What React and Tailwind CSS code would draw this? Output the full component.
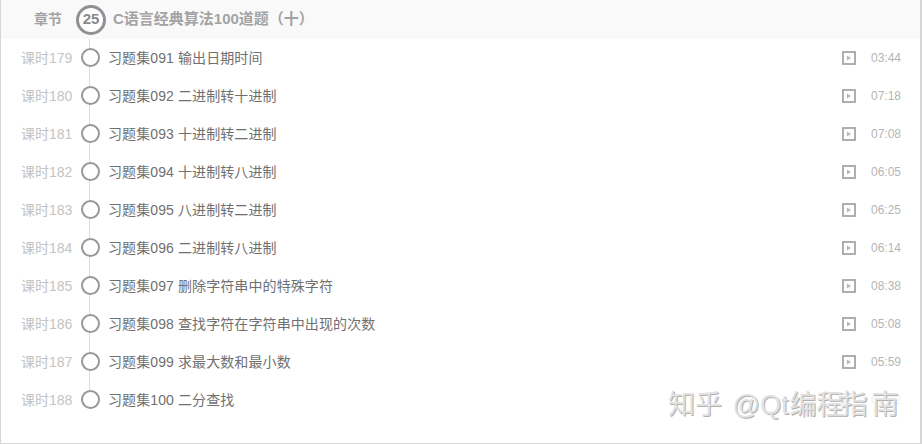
const rows = [
  ["179", "习题集091 输出日期时间", "03:44"],
  ["180", "习题集092 二进制转十进制", "07:18"],
  ["181", "习题集093 十进制转二进制", "07:08"],
  ["182", "习题集094 十进制转八进制", "06:05"],
  ["183", "习题集095 八进制转二进制", "06:25"],
  ["184", "习题集096 二进制转八进制", "06:14"],
  ["185", "习题集097 删除字符串中的特殊字符", "08:38"],
  ["186", "习题集098 查找字符在字符串中出现的次数", "05:08"],
  ["187", "习题集099 求最大数和最小数", "05:59"],
  ["188", "习题集100 二分查找", "05:12"],
];

const font = { fontFamily: '"Liberation Sans", "Noto Sans CJK SC", sans-serif' };

function PlayIcon({ faint }) {
  return (
    <svg width="14" height="14" viewBox="0 0 14 14" className={faint ? "shrink-0 opacity-40" : "shrink-0"}>
      <rect x="1" y="1" width="12" height="12" fill="#fff" stroke="#aeaeae" strokeWidth="2" />
      <path d="M5 4.5 L9 7 L5 9.5 Z" fill="#b5b5b5" />
    </svg>
  );
}

export default function App() {
  return (
    <div style={font} className="relative h-[444px] w-[922px] overflow-hidden border-r-2 border-b border-l border-[#d6d6d6] bg-white">
      <div className="flex h-[39px] items-center bg-[#f9f9f9]">
        <span className="ml-[33px] w-[42px] text-[14px] font-bold text-[#a3a3a3]">章节</span>
        <span className="flex h-[30px] w-[30px] items-center justify-center rounded-full border-[3px] border-[#8f8f94] bg-white text-[15px] font-bold text-[#8a8a8a]">
          25
        </span>
        <span className="ml-[7px] text-[15px] font-bold text-[#a3a3a3]">C语言经典算法100道题（十）</span>
      </div>
      <div className="relative">
        {rows.map(([n, title, time], i) => (
          <div key={n} className="flex h-[38px] items-center">
            <span className="ml-[20px] w-[59px] text-[14px] text-[#c4c4c4]">课时{n}</span>
            <span className="relative flex h-[38px] w-[20px] items-center justify-center">
              {i < rows.length - 1 && <span className="absolute top-[19px] left-[9px] h-[38px] w-px bg-[#dcdcdc]" />}
              {i === 0 && <span className="absolute top-0 left-[9px] h-[19px] w-px bg-[#dcdcdc]" />}
              <span className="relative -mt-px h-[19px] w-[19px] rounded-full border-2 border-[#98989c] bg-white" />
            </span>
            <span className="ml-[8px] flex-1 text-[14px] tracking-[0.1px] text-[#707070]">{title}</span>
            <PlayIcon faint={i === rows.length - 1} />
            <span className={i === rows.length - 1 ? "mr-[19px] ml-[15px] text-[12px] text-[#b5b5b5] opacity-20" : "mr-[19px] ml-[15px] text-[12px] text-[#b5b5b5]"}>{time}</span>
          </div>
        ))}
      </div>
      <div className="absolute top-[387px] left-[667px] text-[27px] leading-[36px] whitespace-nowrap text-[#e2e2e2]" style={{ ...font, textShadow: "1px 1px 0 #b0b0b0, -1px -1px 0 #fff" }}>
        知乎<span className="ml-[3px]"> @Qt</span><span className="ml-[1px]">编程</span><span className="ml-[-3px]">指</span><span className="ml-[4px]">南</span>
      </div>
    </div>
  );
}
